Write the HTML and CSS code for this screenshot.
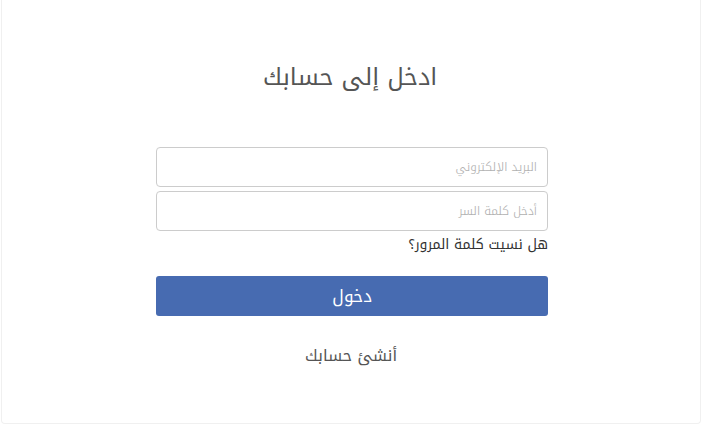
FILE: index.html
```html
<!DOCTYPE html>
<html lang="ar" dir="rtl">
<head>
<meta charset="UTF-8">
<meta name="viewport" content="width=device-width, initial-scale=1.0">
<title>تسجيل الدخول</title>
<link rel="stylesheet" href="styles.css">
</head>
<body>

<!-- LOGIN CARD -->
<div class="login-card">
    <h2 class="login-title">ادخل إلى حسابك</h2>

    <form class="login-form">
        <input class="login-input" type="email" placeholder="البريد الإلكتروني">
        <input class="login-input" type="password" placeholder="أدخل كلمة السر">
        <a href="#" class="forgot-link">هل نسيت كلمة المرور؟</a>
        <button type="button" class="login-button">دخول</button>
    </form>

    <a href="#" class="signup-link">أنشئ حسابك</a>
</div>

</body>
</html>
```

FILE: styles.css
```css
body {
    margin: 0;
    padding: 0 1px 0 1px;
    background: #fff;
    font-family: 'Noto Kufi Arabic', 'DejaVu Sans', sans-serif;
    color: #555;
}

.login-card {
    height: 423px;
    border: 1px solid #f0f0f0;
    border-top: none;
    border-radius: 0 0 4px 4px;
    display: flex;
    flex-direction: column;
    align-items: center;
}

.login-title {
    margin: 59px 0 0 -2px;
    font-size: 24px;
    font-weight: normal;
    line-height: 36px;
    color: #555;
}

.login-form {
    width: 392px;
    margin: 52px -2px 0 0;
    display: flex;
    flex-direction: column;
    gap: 4px;
}

.login-input {
    height: 40px;
    box-sizing: border-box;
    border: 1px solid #ccc;
    border-radius: 4px;
    padding: 0 10px;
    font-family: 'Noto Kufi Arabic', sans-serif;
    font-size: 12px;
    color: #333;
    outline: none;
}

.login-input::placeholder {
    color: #b0b0b0;
    font-weight: 300;
}

.forgot-link {
    font-size: 14px;
    line-height: 20px;
    color: #333;
    text-decoration: none;
}

.login-button {
    margin-top: 17px;
    height: 40px;
    border: none;
    border-radius: 3px;
    background: #476bb1;
    color: #fff;
    font-family: 'Noto Kufi Arabic', sans-serif;
    font-size: 17px;
    cursor: pointer;
}

.signup-link {
    margin-top: 27px;
    font-size: 16px;
    line-height: 26px;
    color: #555;
    text-decoration: none;
}
```
